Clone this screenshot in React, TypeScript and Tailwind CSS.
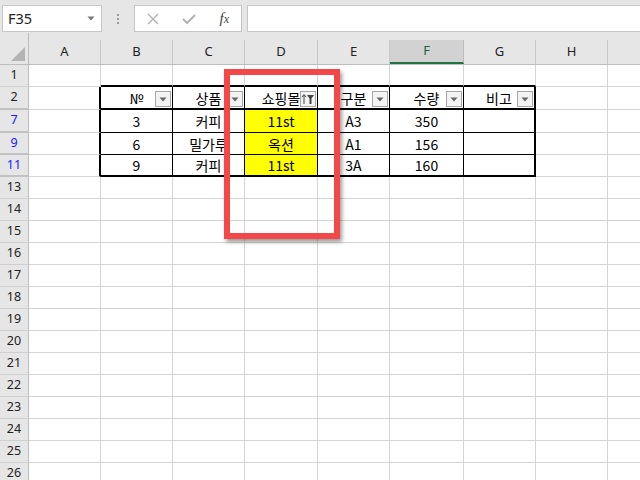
import React from 'react';

type RowDef = { n: string; h: string; blue?: boolean; cells?: string[] };

const COLS = [
  { k: 'A', w: 'w-[72px]' },
  { k: 'B', w: 'w-[72px]' },
  { k: 'C', w: 'w-[72px]' },
  { k: 'D', w: 'w-[73px]' },
  { k: 'E', w: 'w-[72px]' },
  { k: 'F', w: 'w-[74px]' },
  { k: 'G', w: 'w-[72px]' },
  { k: 'H', w: 'w-[72px]' },
  { k: '', w: 'w-[40px]' },
];

const ROWS: RowDef[] = [
  { n: '1', h: 'h-[22px]' },
  { n: '2', h: 'h-[23px]', cells: ['№', '상품', '쇼핑몰', '구분', '수량', '비고'] },
  { n: '7', h: 'h-[23px]', blue: true, cells: ['3', '커피', '11st', 'A3', '350', ''] },
  { n: '9', h: 'h-[22px]', blue: true, cells: ['6', '밀가루', '옥션', 'A1', '156', ''] },
  { n: '11', h: 'h-[22px]', blue: true, cells: ['9', '커피', '11st', '3A', '160', ''] },
  ...['13', '14', '15', '16', '17', '18', '19', '20', '21', '22', '23', '24', '25', '26'].map(
    (n) => ({ n, h: 'h-[22px]' }),
  ),
];

function DropButton({ filtered }: { filtered?: boolean }) {
  return (
    <div className="absolute right-[1px] bottom-[1px] w-[16px] h-[16px] border border-[#a6a6a6] bg-[#f3f3f3] flex items-center justify-center">
      {filtered ? (
        <svg width="14" height="12" viewBox="0 0 14 12">
          <path d="M3 2 L3 11" stroke="#444" strokeWidth="1" />
          <path d="M1 4 L3 1.5 L5 4" stroke="#444" strokeWidth="1" fill="none" />
          <path d="M6 2 H13 L10.5 5.5 V11 H8.5 V5.5 Z" fill="#444" />
        </svg>
      ) : (
        <svg width="8" height="5" viewBox="0 0 8 5">
          <path d="M0.5 0.5 H7.5 L4 4.5 Z" fill="#666" />
        </svg>
      )}
    </div>
  );
}

function Cell({ row, ci }: { row: RowDef; ci: number }) {
  const col = COLS[ci];
  const inTable = !!row.cells;
  const tableCol = ci >= 1 && ci <= 6;
  const isHead = row.n === '2';

  let right = 'border-r border-r-[#d4d4d4]';
  if (inTable && ci === 0) right = 'border-r-2 border-r-black';
  else if (inTable && ci === 6) right = 'border-r-2 border-r-black';
  else if (inTable && tableCol) right = 'border-r border-r-black';

  let bottom = 'border-b border-b-[#d4d4d4]';
  if (row.n === '1' && tableCol) bottom = 'border-b-2 border-b-black';
  else if (inTable && tableCol && (isHead || row.n === '11')) bottom = 'border-b-2 border-b-black';
  else if (inTable && tableCol) bottom = 'border-b border-b-black';

  const yellow = inTable && !isHead && ci === 3 ? 'bg-[#ffff00]' : 'bg-white';
  const text = inTable && tableCol ? row.cells![ci - 1] : '';

  return (
    <div
      className={`${col.w} shrink-0 h-full relative flex items-center justify-center ${right} ${bottom} ${yellow} text-[14px] text-black font-['Noto_Sans_CJK_KR',sans-serif] whitespace-nowrap`}
    >
      <span className="leading-none">{text}</span>
      {isHead && tableCol && <DropButton filtered={ci === 3} />}
    </div>
  );
}

export default function App() {
  return (
    <div className="relative w-[640px] h-[480px] overflow-hidden bg-white font-['Noto_Sans',sans-serif] select-none">
      {/* Formula bar */}
      <div className="h-[33px] bg-[#e6e6e6] flex items-start pt-[5px]">
        <div className="ml-[2px] w-[100px] h-[27px] bg-white border border-[#c6c6c6] flex items-center justify-between pl-[5px] pr-[6px]">
          <span className="text-[14.5px] text-[#222] leading-none">F35</span>
          <svg width="8" height="5" viewBox="0 0 8 5">
            <path d="M0.5 0.5 H7.5 L4 4.5 Z" fill="#777" />
          </svg>
        </div>
        <div className="w-[32px] h-[27px] flex flex-col items-center justify-center gap-[2px]">
          <span className="w-[2px] h-[2px] bg-[#9a9a9a]" />
          <span className="w-[2px] h-[2px] bg-[#9a9a9a]" />
          <span className="w-[2px] h-[2px] bg-[#9a9a9a]" />
        </div>
        <div className="w-[108px] h-[27px] bg-white border border-[#c6c6c6] flex items-center justify-between px-[12px]">
          <svg width="12" height="12" viewBox="0 0 12 12">
            <path d="M1 1 L11 11 M11 1 L1 11" stroke="#b3b3b3" strokeWidth="1.4" />
          </svg>
          <svg width="14" height="12" viewBox="0 0 14 12">
            <path d="M1 6 L5 10 L13 2" stroke="#b3b3b3" strokeWidth="2" fill="none" />
          </svg>
          <span className="italic font-['Liberation_Serif',serif] text-[15px] text-[#444] leading-none">
            f<span className="text-[12px]">x</span>
          </span>
        </div>
        <div className="ml-[5px] flex-1 h-[27px] bg-white border border-r-0 border-[#c6c6c6]" />
      </div>

      {/* Column headers */}
      <div className="h-[32px] bg-[#e6e6e6] flex items-end border-b border-[#bdbdbd]">
        <div className="w-[29px] shrink-0 h-full border-r border-[#bdbdbd] flex items-end justify-end pr-[3px] pb-[3px]">
          <svg width="14" height="14" viewBox="0 0 14 14">
            <path d="M14 0 L14 14 L0 14 Z" fill="#b4b4b4" />
          </svg>
        </div>
        {COLS.map((c) =>
          c.k === 'F' ? (
            <div
              key={c.k}
              className={`${c.w} shrink-0 h-[24px] bg-[#d2d2d2] border-r border-[#bdbdbd] border-b-2 border-b-[#217346] flex items-center justify-center text-[13px] text-[#1f5f3a]`}
            >
              {c.k}
            </div>
          ) : (
            <div
              key={c.k || 'x'}
              className={`${c.w} shrink-0 h-[24px] border-r border-[#c8c8c8] flex items-center justify-center text-[13px] text-[#222]`}
            >
              {c.k}
            </div>
          ),
        )}
      </div>

      {/* Rows */}
      <div className="flex flex-col">
        {ROWS.map((r) => (
          <div key={r.n} className={`${r.h} flex shrink-0`}>
            <div
              className={`w-[29px] shrink-0 h-full bg-[#e6e6e6] border-r border-[#bdbdbd] ${
                r.n === '2' || r.blue ? 'border-b-2 border-b-[#c2c2c2]' : 'border-b border-b-[#cfcfcf]'
              } flex items-center justify-center text-[12.5px] ${r.blue ? 'text-[#1a1aff]' : 'text-[#222]'}`}
            >
              {r.n}
            </div>
            {COLS.map((c, ci) => (
              <Cell key={c.k || 'x'} row={r} ci={ci} />
            ))}
          </div>
        ))}
      </div>

      {/* Red highlight box */}
      <div className="absolute left-[224px] top-[69px] w-[116px] h-[170px] border-[6px] border-[#f44848] shadow-[2px_3px_4px_rgba(0,0,0,0.4)]" />
    </div>
  );
}
